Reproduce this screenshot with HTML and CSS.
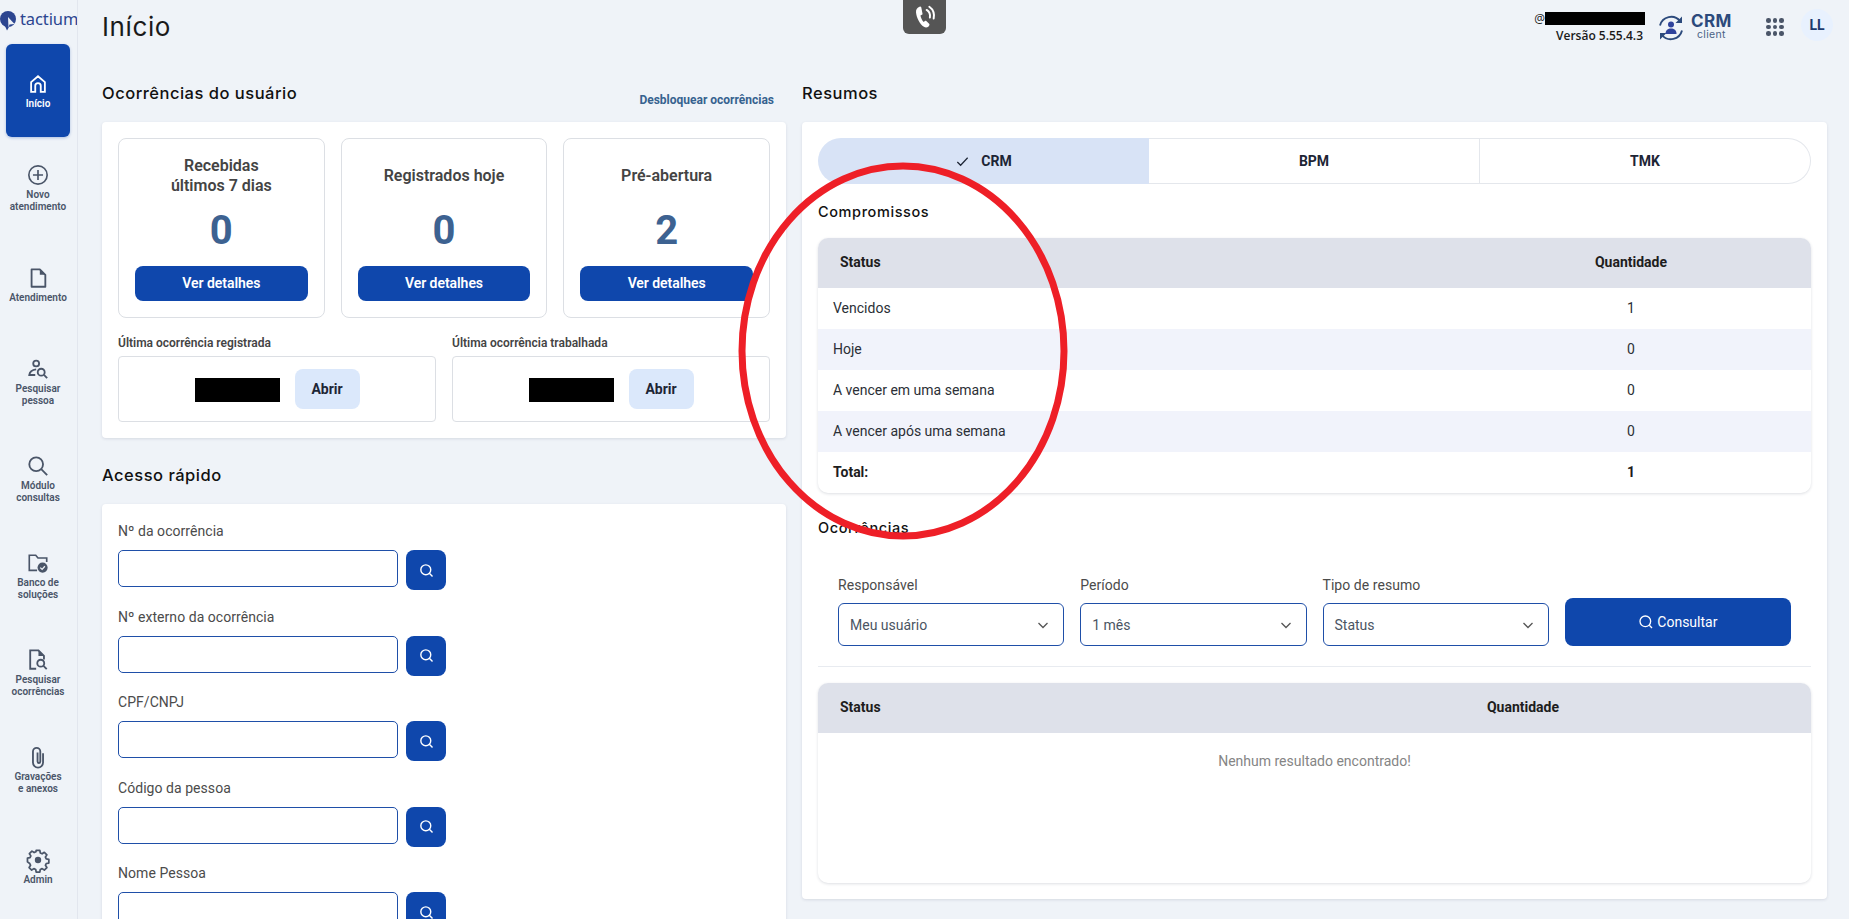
FILE: index.html
```html
<!DOCTYPE html>
<html lang="pt-BR">
<head>
<meta charset="utf-8">
<title>Início</title>
<link rel="stylesheet" href="styles.css">
</head>
<body>
<aside class="sidebar">
  <div class="logo">
    <svg class="logo-mark" viewBox="0 0 16 22"><circle cx="8" cy="10" r="8" fill="#2c4590"/><path d="M4 15l3 6.500 2-3.500z" fill="#2c4590"/><path d="M8 8l6.500 7-5 .5-1 3z" fill="#eff3f8"/></svg>
    <span class="logo-text">tactium</span>
  </div>
  <nav class="nav">
    <a class="nav-item active">
      <svg class="nav-icon" viewBox="0 0 24 24"><path d="M4.500 20.500V10L12 3.500 19.500 10v10.500h-4.500V14a3 3 0 0 0-6 0v6.500z" class="st" stroke-width="2"/></svg>
      <span>Início</span>
    </a>
    <a class="nav-item">
      <svg class="nav-icon" viewBox="0 0 24 24"><circle cx="12" cy="12" r="10" class="st" stroke-width="1.800"/><path d="M12 6.500v11M6.500 12h11" class="st" stroke-width="1.800"/></svg>
      <span>Novo<br>atendimento</span>
    </a>
    <a class="nav-item">
      <svg class="nav-icon" viewBox="0 0 24 24"><path d="M5 2.500h9l6 6v13H5z" class="st" stroke-width="2" stroke-linejoin="round"/><path d="M14 2.500l6 6h-6z" class="fl"/></svg>
      <span>Atendimento</span>
    </a>
    <a class="nav-item">
      <svg class="nav-icon" viewBox="0 0 24 24"><circle cx="10" cy="6" r="3.200" class="st" stroke-width="2"/><path d="M10 12.500C6 13 3 15 2.500 18.500H9" class="st" stroke-width="2"/><circle cx="15.500" cy="15.500" r="3.800" class="st" stroke-width="2"/><path d="M18.500 18.500l3.500 3.500" class="st" stroke-width="2"/></svg>
      <span>Pesquisar<br>pessoa</span>
    </a>
    <a class="nav-item">
      <svg class="nav-icon" viewBox="0 0 24 24"><circle cx="10" cy="10" r="7.500" class="st" stroke-width="2"/><path d="M15.500 15.500L22 22" class="st" stroke-width="2"/></svg>
      <span>Módulo<br>consultas</span>
    </a>
    <a class="nav-item">
      <svg class="nav-icon" viewBox="0 0 24 24"><path d="M11 20H2.500V3.500h7l2.500 3h9.500V11" class="st" stroke-width="1.800"/><circle cx="17" cy="17" r="5.500" class="fl"/><path d="M14.500 17l2 2 3-3.500" class="st wh" stroke-width="1.400"/></svg>
      <span>Banco de<br>soluções</span>
    </a>
    <a class="nav-item">
      <svg class="nav-icon" viewBox="0 0 24 24"><path d="M10 21.500H3.500v-20h9l6 6v4" class="st" stroke-width="2"/><path d="M12.500 1.500l6 6h-6z" class="fl"/><circle cx="15" cy="15.500" r="3.800" class="st" stroke-width="2"/><path d="M18 18.500l3.500 3.500" class="st" stroke-width="2"/></svg>
      <span>Pesquisar<br>ocorrências</span>
    </a>
    <a class="nav-item">
      <svg class="nav-icon" viewBox="0 0 24 24"><path d="M17.500 8v10a5.500 5.500 0 0 1-11 0V6a4 4 0 0 1 8 0v11a1.500 1.500 0 0 1-3 0V7" class="st" stroke-width="2"/></svg>
      <span>Gravações<br>e anexos</span>
    </a>
    <a class="nav-item">
      <svg class="nav-icon" viewBox="0 0 24 24"><circle cx="12" cy="12" r="3.500" class="fl"/><path d="M10 1.500h4l.5 2.800 2 .9 2.400-1.600 2.800 2.800-1.600 2.400.9 2 2.800.5v4l-2.800.5-.9 2 1.600 2.400-2.800 2.800-2.400-1.600-2 .9-.5 2.800h-4l-.5-2.800-2-.9-2.400 1.600-2.800-2.800 1.600-2.400-.9-2L0.500 14v-4l2.800-.5.9-2L2.600 5.100l2.800-2.800 2.400 1.600 2-.9z" class="st" stroke-width="1.900" stroke-linejoin="round"/></svg>
      <span>Admin</span>
    </a>
  </nav>
</aside>

<main class="main">
  <header class="topbar">
    <h1 class="page-title">Início</h1>
    <div class="phone-tab">
      <svg viewBox="0 0 24 24" class="phone-icon"><path d="M7 2.500c-2 .8-3.500 2.500-3.300 5 .4 5 3.500 11 7.300 13.500 1.500 1 3 .8 4.300-.3l.7-1c.3-.5.2-1-.2-1.400l-2.600-2.500c-.4-.3-.9-.3-1.300 0l-1.100.8c-1.500-1.500-2.600-4-3-6.100l1.300-.5c.5-.2.700-.6.600-1.100L8.600 3.300C8.400 2.600 7.700 2.200 7 2.500z" fill="#fff"/><path d="M13.500 5.500c2.500 1.500 3.500 4 3 7M16 2.500c3.500 2.500 5 6 4 11" fill="none" stroke="#fff" stroke-width="1.800" stroke-linecap="round"/></svg>
    </div>
    <div class="tools">
      <div class="user-info">
        <div class="user-line"><span>@</span><span class="redact redact-user"></span></div>
        <div class="version">Versão 5.55.4.3</div>
      </div>
      <div class="crm-brand">
        <svg class="crm-icon" viewBox="0 0 28 28"><path d="M3 11.500A11.500 11.500 0 0 1 23 7M25 16.500A11.500 11.500 0 0 1 5 21" fill="none" stroke="#2c4a7c" stroke-width="1.900"/><path d="M25 2.500v6.500h-6.500zM3 25.500V19h6.500z" fill="#2c4a7c"/><circle cx="14" cy="10.500" r="3" fill="#2f439c"/><path d="M8.500 20c0-4 2.500-5.500 5.500-5.500s5.500 1.500 5.500 5.500z" fill="#2f439c"/></svg>
        <div class="crm-text"><span class="crm-name">CRM</span><span class="crm-sub">client</span></div>
      </div>
      <div class="apps">
        <i></i><i></i><i></i><i></i><i></i><i></i><i></i><i></i><i></i>
      </div>
      <div class="avatar">LL</div>
    </div>
  </header>

  <div class="columns">
    <div class="col">
      <div class="section-head">
        <h2 class="section-title">Ocorrências do usuário</h2>
        <a class="unlock">Desbloquear ocorrências</a>
      </div>
      <section class="card occ-card">
        <div class="stats">
          <div class="stat">
            <div class="stat-title">Recebidas<br>últimos 7 dias</div>
            <div class="stat-num">0</div>
            <button class="btn-detail">Ver detalhes</button>
          </div>
          <div class="stat">
            <div class="stat-title">Registrados hoje</div>
            <div class="stat-num">0</div>
            <button class="btn-detail">Ver detalhes</button>
          </div>
          <div class="stat">
            <div class="stat-title">Pré-abertura</div>
            <div class="stat-num">2</div>
            <button class="btn-detail">Ver detalhes</button>
          </div>
        </div>
        <div class="lasts">
          <div>
            <div class="last-label">Última ocorrência registrada</div>
            <div class="last-box"><span class="redact redact-occ"></span><button class="btn-open">Abrir</button></div>
          </div>
          <div>
            <div class="last-label">Última ocorrência trabalhada</div>
            <div class="last-box"><span class="redact redact-occ"></span><button class="btn-open">Abrir</button></div>
          </div>
        </div>
      </section>

      <div class="section-head section-head-quick">
        <h2 class="section-title">Acesso rápido</h2>
      </div>
      <section class="card quick-card">
        <div class="field"><label class="field-label">Nº da ocorrência</label><div class="field-row"><input class="field-input" type="text"><button class="btn-search"><svg viewBox="0 0 24 24"><circle cx="11" cy="11" r="7" /><path d="M16 16l4.500 4.500"/></svg></button></div></div>
        <div class="field"><label class="field-label">Nº externo da ocorrência</label><div class="field-row"><input class="field-input" type="text"><button class="btn-search"><svg viewBox="0 0 24 24"><circle cx="11" cy="11" r="7" /><path d="M16 16l4.500 4.500"/></svg></button></div></div>
        <div class="field"><label class="field-label">CPF/CNPJ</label><div class="field-row"><input class="field-input" type="text"><button class="btn-search"><svg viewBox="0 0 24 24"><circle cx="11" cy="11" r="7" /><path d="M16 16l4.500 4.500"/></svg></button></div></div>
        <div class="field"><label class="field-label">Código da pessoa</label><div class="field-row"><input class="field-input" type="text"><button class="btn-search"><svg viewBox="0 0 24 24"><circle cx="11" cy="11" r="7" /><path d="M16 16l4.500 4.500"/></svg></button></div></div>
        <div class="field"><label class="field-label">Nome Pessoa</label><div class="field-row"><input class="field-input" type="text"><button class="btn-search"><svg viewBox="0 0 24 24"><circle cx="11" cy="11" r="7" /><path d="M16 16l4.500 4.500"/></svg></button></div></div>
      </section>
    </div>

    <div class="col">
      <div class="section-head">
        <h2 class="section-title">Resumos</h2>
      </div>
      <section class="card resume-card">
        <div class="tabs">
          <div class="tab selected"><svg viewBox="0 0 16 16" class="tab-check"><path d="M2.500 8.500l3.500 3.500 7.500-8"/></svg>CRM</div>
          <div class="tab">BPM</div>
          <div class="tab">TMK</div>
        </div>
        <h3 class="sub-title sub-first">Compromissos</h3>
        <div class="table table-a">
          <div class="t-row t-head"><div class="t-status">Status</div><div class="t-qty">Quantidade</div></div>
          <div class="t-row"><div>Vencidos</div><div class="t-qty">1</div></div>
          <div class="t-row alt"><div>Hoje</div><div class="t-qty">0</div></div>
          <div class="t-row"><div>A vencer em uma semana</div><div class="t-qty">0</div></div>
          <div class="t-row alt"><div>A vencer após uma semana</div><div class="t-qty">0</div></div>
          <div class="t-row t-total"><div>Total:</div><div class="t-qty">1</div></div>
        </div>
        <h3 class="sub-title sub-second">Ocorrências</h3>
        <div class="filters">
          <div class="filter"><label class="field-label">Responsável</label><div class="select"><span>Meu usuário</span><svg viewBox="0 0 12 12"><path d="M1.500 4l4.500 4.500L10.500 4"/></svg></div></div>
          <div class="filter"><label class="field-label">Período</label><div class="select"><span>1 mês</span><svg viewBox="0 0 12 12"><path d="M1.500 4l4.500 4.500L10.500 4"/></svg></div></div>
          <div class="filter"><label class="field-label">Tipo de resumo</label><div class="select"><span>Status</span><svg viewBox="0 0 12 12"><path d="M1.500 4l4.500 4.500L10.500 4"/></svg></div></div>
          <button class="btn-consult"><svg viewBox="0 0 24 24"><circle cx="11" cy="11" r="8"/><path d="M17 17l4 4"/></svg>Consultar</button>
        </div>
        <hr class="divider">
        <div class="table table-b">
          <div class="t-row t-head"><div class="t-status">Status</div><div class="t-qty">Quantidade</div></div>
          <div class="t-empty">Nenhum resultado encontrado!</div>
        </div>
      </section>
    </div>
  </div>
</main>

<svg class="annotation" viewBox="0 0 336 386"><ellipse cx="168" cy="193" rx="161" ry="185"/></svg>
</body>
</html>
```

FILE: styles.css
```css
* { box-sizing: border-box; }
html, body { margin: 0; height: 919px; overflow: hidden; }
body {
  position: relative;
  display: flex;
  background: #eff3f8;
  font-family: Roboto, "Liberation Sans", sans-serif;
  color: #222;
}
h1, h2, h3 { margin: 0; }
button { font-family: inherit; border: 0; cursor: pointer; }

.sidebar {
  flex: 0 0 78px;
  border-right: 1px solid #e2e6ee;
  height: 919px;
  overflow: hidden;
}
.logo { height: 44px; display: flex; align-items: center; padding-bottom: 6px; }
.logo-mark { width: 16px; height: 22px; flex: none; margin: 2px 4px 0 0; }
.logo-text {
  font-family: "Noto Sans", sans-serif;
  font-size: 16.500px;
  color: #2c4590;
  letter-spacing: -0.100px;
  line-height: 1;
}
.nav { display: flex; flex-direction: column; gap: 4.100px; padding: 0 7px 0 6px; }
.nav-item {
  height: 93px;
  padding-top: 1px;
  border-radius: 6px;
  display: flex;
  flex-direction: column;
  align-items: center;
  justify-content: center;
  text-align: center;
  font-size: 10px;
  font-weight: 600;
  line-height: 12px;
  color: #4a5568;
  gap: 3px;
  white-space: nowrap;
}
.nav-item.active {
  background: #0f47ac;
  color: #fff;
  box-shadow: 0 1px 3px rgba(15, 71, 172, .3);
}
.nav-icon { width: 22px; height: 22px; overflow: visible; }
.st { fill: none; stroke: #4a5568; }
.fl { fill: #4a5568; }
.st.wh { stroke: #eff3f8; }
.active .st { stroke: #fff; }

.main { flex: 1; min-width: 0; padding: 0 22px 0 24px; position: relative; }
.topbar { height: 60px; display: flex; justify-content: space-between; }
.page-title {
  font-family: Inter, sans-serif;
  font-size: 26px;
  font-weight: 400;
  color: #1a1a1a;
  line-height: 54px;
  letter-spacing: 0.600px;
}
.phone-tab {
  position: absolute;
  left: 825px;
  top: 0;
  width: 43px;
  height: 34px;
  background: #555;
  border-radius: 0 0 6px 6px;
  display: flex;
  align-items: center;
  justify-content: center;
}
.phone-icon { width: 26px; height: 26px; }
.tools { display: flex; align-items: flex-start; }
.user-info { padding-top: 11px; width: 112px; display: flex; flex-direction: column; align-items: flex-end; }
.user-line { display: flex; align-items: center; font-size: 12px; height: 15px; color: #222; font-family: "Open Sans", sans-serif; padding-right: 2px; }
.redact { display: inline-block; background: #000; }
.redact-user { width: 100px; height: 13px; }
.version {
  font-family: "Open Sans", sans-serif;
  font-size: 12px;
  font-weight: 600;
  color: #1a1a1a;
  margin-top: 2px;
  padding-right: 4px;
  line-height: 16px;
}
.crm-brand { display: flex; align-items: center; margin: 13px 0 0 10px; width: 108px; }
.crm-icon { width: 28px; height: 28px; flex: none; margin-right: 6px; }
.crm-text { display: flex; flex-direction: column; align-items: center; padding-bottom: 2px; }
.crm-name { font-family: Inter, sans-serif; font-weight: 700; font-size: 17px; line-height: 17px; color: #2c4a7c; letter-spacing: .400px; }
.crm-sub { font-family: Inter, sans-serif; font-size: 10.500px; line-height: 10px; color: #4a6285; letter-spacing: .300px; }
.apps {
  display: grid;
  grid-template-columns: repeat(3, 4px);
  gap: 2px 2.500px;
  margin: 18px 18px 0 1px;
}
.apps i { width: 4.500px; height: 4.500px; border-radius: 50%; background: #4a5568; display: block; }
.avatar {
  width: 32px;
  height: 32px;
  border-radius: 50%;
  background: #e8f1fe;
  color: #1d3a6e;
  font-size: 14px;
  font-weight: 700;
  display: flex;
  align-items: center;
  justify-content: center;
  margin-top: 9px;
  margin-right: -6px;
}

.columns { display: grid; grid-template-columns: 684px 1025px; gap: 16px; }
.section-head {
  height: 62px;
  display: flex;
  justify-content: space-between;
  align-items: center;
  padding-top: 4px;
  position: relative;
}
.section-head-quick { height: 66px; padding-top: 7px; }
.section-title {
  font-family: Inter, sans-serif;
  font-size: 16.500px;
  font-weight: 500;
  color: #111;
  letter-spacing: .500px;
}
.unlock {
  font-size: 12px;
  font-weight: 700;
  color: #36628f;
  padding-top: 14px;
  margin-right: 12px;
}
.card {
  background: #fff;
  border-radius: 4px;
  box-shadow: 0 1px 3px rgba(30, 40, 70, .12);
  padding: 16px;
}
.stats { display: grid; grid-template-columns: repeat(3, 1fr); gap: 16px; }
.stat {
  height: 180px;
  border: 1px solid #dcdfe4;
  border-radius: 8px;
  padding: 12px 16px 16px;
  display: flex;
  flex-direction: column;
}
.stat-title {
  height: 50px;
  display: flex;
  align-items: center;
  justify-content: center;
  text-align: center;
  font-size: 16px;
  font-weight: 600;
  line-height: 20px;
  color: #444;
}
.stat-num {
  height: 59px;
  margin-bottom: 6px;
  text-align: center;
  line-height: 59px;
  font-size: 40px;
  font-weight: 700;
  color: #3d6291;
}
.btn-detail {
  height: 35px;
  background: #0f47ac;
  color: #fff;
  border-radius: 8px;
  font-size: 14px;
  font-weight: 600;
  letter-spacing: -.050px;
  padding-bottom: 3px;
}
.lasts { display: grid; grid-template-columns: 1fr 1fr; gap: 16px; margin-top: 18px; }
.last-label { font-size: 12px; font-weight: 600; line-height: 14px; color: #444; margin-bottom: 6px; }
.last-box {
  height: 66px;
  border: 1px solid #dcdfe4;
  border-radius: 4px;
  display: flex;
  align-items: center;
  justify-content: center;
  gap: 15px;
}
.redact-occ { width: 85px; height: 24px; margin-top: 1px; }
.btn-open {
  width: 65px;
  height: 40px;
  background: #dbe8fb;
  border-radius: 8px;
  color: #1d2535;
  font-size: 14px;
  font-weight: 700;
}
.quick-card { padding: 17px 16px 0; }
.field { margin-bottom: 16.500px; }
.field-label {
  display: block;
  font-family: Roboto, sans-serif;
  font-size: 14px;
  line-height: 20px;
  color: #4b4b4b;
  letter-spacing: .050px;
}
.field-row { display: flex; gap: 8px; margin-top: 9px; align-items: flex-start; }
.field-input {
  width: 280px;
  height: 37px;
  border: 1px solid #1f4fa8;
  border-radius: 5px;
  background: #fff;
  outline: none;
}
.btn-search {
  width: 40px;
  height: 40px;
  border-radius: 8px;
  background: #0f47ac;
  display: flex;
  align-items: center;
  justify-content: center;
  padding: 0;
}
.btn-search svg { width: 17px; height: 17px; fill: none; stroke: #fff; stroke-width: 2; }

.tabs { display: grid; grid-template-columns: repeat(3, 1fr); height: 46px; }
.tab {
  display: flex;
  align-items: center;
  justify-content: center;
  gap: 11px;
  border: 1px solid #e4e7ec;
  border-left: 0;
  background: #fff;
  font-size: 14px;
  font-weight: 700;
  color: #1d2535;
}
.tab:last-child { border-radius: 0 23px 23px 0; }
.tab.selected { background: #d8e3f6; border: 0; border-radius: 23px 0 0 23px; }
.tab-check { width: 15px; height: 15px; fill: none; stroke: #1d2535; stroke-width: 1.300; }
.sub-title {
  font-family: Inter, sans-serif;
  font-size: 14.500px;
  font-weight: 500;
  line-height: 20px;
  color: #111;
  letter-spacing: .600px;
}
.sub-first { margin: 18px 0 16px; }
.sub-second { margin-top: 25px; }
.table {
  border-radius: 10px;
  overflow: hidden;
  box-shadow: 0 1px 3px rgba(30, 40, 70, .15);
  background: #fff;
}
.t-row {
  display: grid;
  align-items: center;
  height: 41px;
  padding: 0 0 1px 15px;
  font-size: 14px;
  color: #2b2f36;
}
.table-a .t-row { grid-template-columns: 1fr 360px; }
.table-b .t-row { grid-template-columns: 1fr 576px; }
.t-qty { text-align: center; }
.t-row.alt { background: #f1f3fb; }
.t-head { height: 50px; background: #dee1ea; font-weight: 700; color: #1d1d1d; padding-bottom: 2px; }
.t-status { padding-left: 7px; }
.t-total { font-weight: 700; color: #1d1d1d; }
.t-head .t-qty { font-weight: 700; }

.filters {
  display: grid;
  grid-template-columns: repeat(4, 1fr);
  gap: 16px;
  align-items: end;
  padding: 0 20px;
  margin-top: 37px;
}
.filter .field-label { margin-bottom: 8px; }
.select {
  height: 43px;
  border: 1px solid #1f4fa8;
  border-radius: 6px;
  padding: 0 14px 0 11px;
  display: flex;
  align-items: center;
  justify-content: space-between;
  font-size: 14px;
  color: #4b5563;
}
.select svg { width: 12px; height: 12px; fill: none; stroke: #555; stroke-width: 1.300; }
.btn-consult {
  height: 48px;
  background: #0f47ac;
  color: #fff;
  border-radius: 8px;
  font-size: 14px;
  display: flex;
  align-items: center;
  justify-content: center;
  gap: 3px;
  padding-bottom: 2px;
}
.btn-consult svg { width: 16px; height: 16px; fill: none; stroke: #fff; stroke-width: 2; }
.divider { border: 0; border-top: 1px solid #e8ebf0; margin: 20px 0 16px; }
.table-b { height: 200px; }
.t-empty { padding-top: 18px; text-align: center; font-size: 14px; line-height: 20px; color: #858585; }

.annotation {
  position: absolute;
  left: 734.500px;
  top: 158px;
  width: 336px;
  height: 386px;
  pointer-events: none;
}
.annotation ellipse { fill: none; stroke: #ee1f27; stroke-width: 7; }
```
